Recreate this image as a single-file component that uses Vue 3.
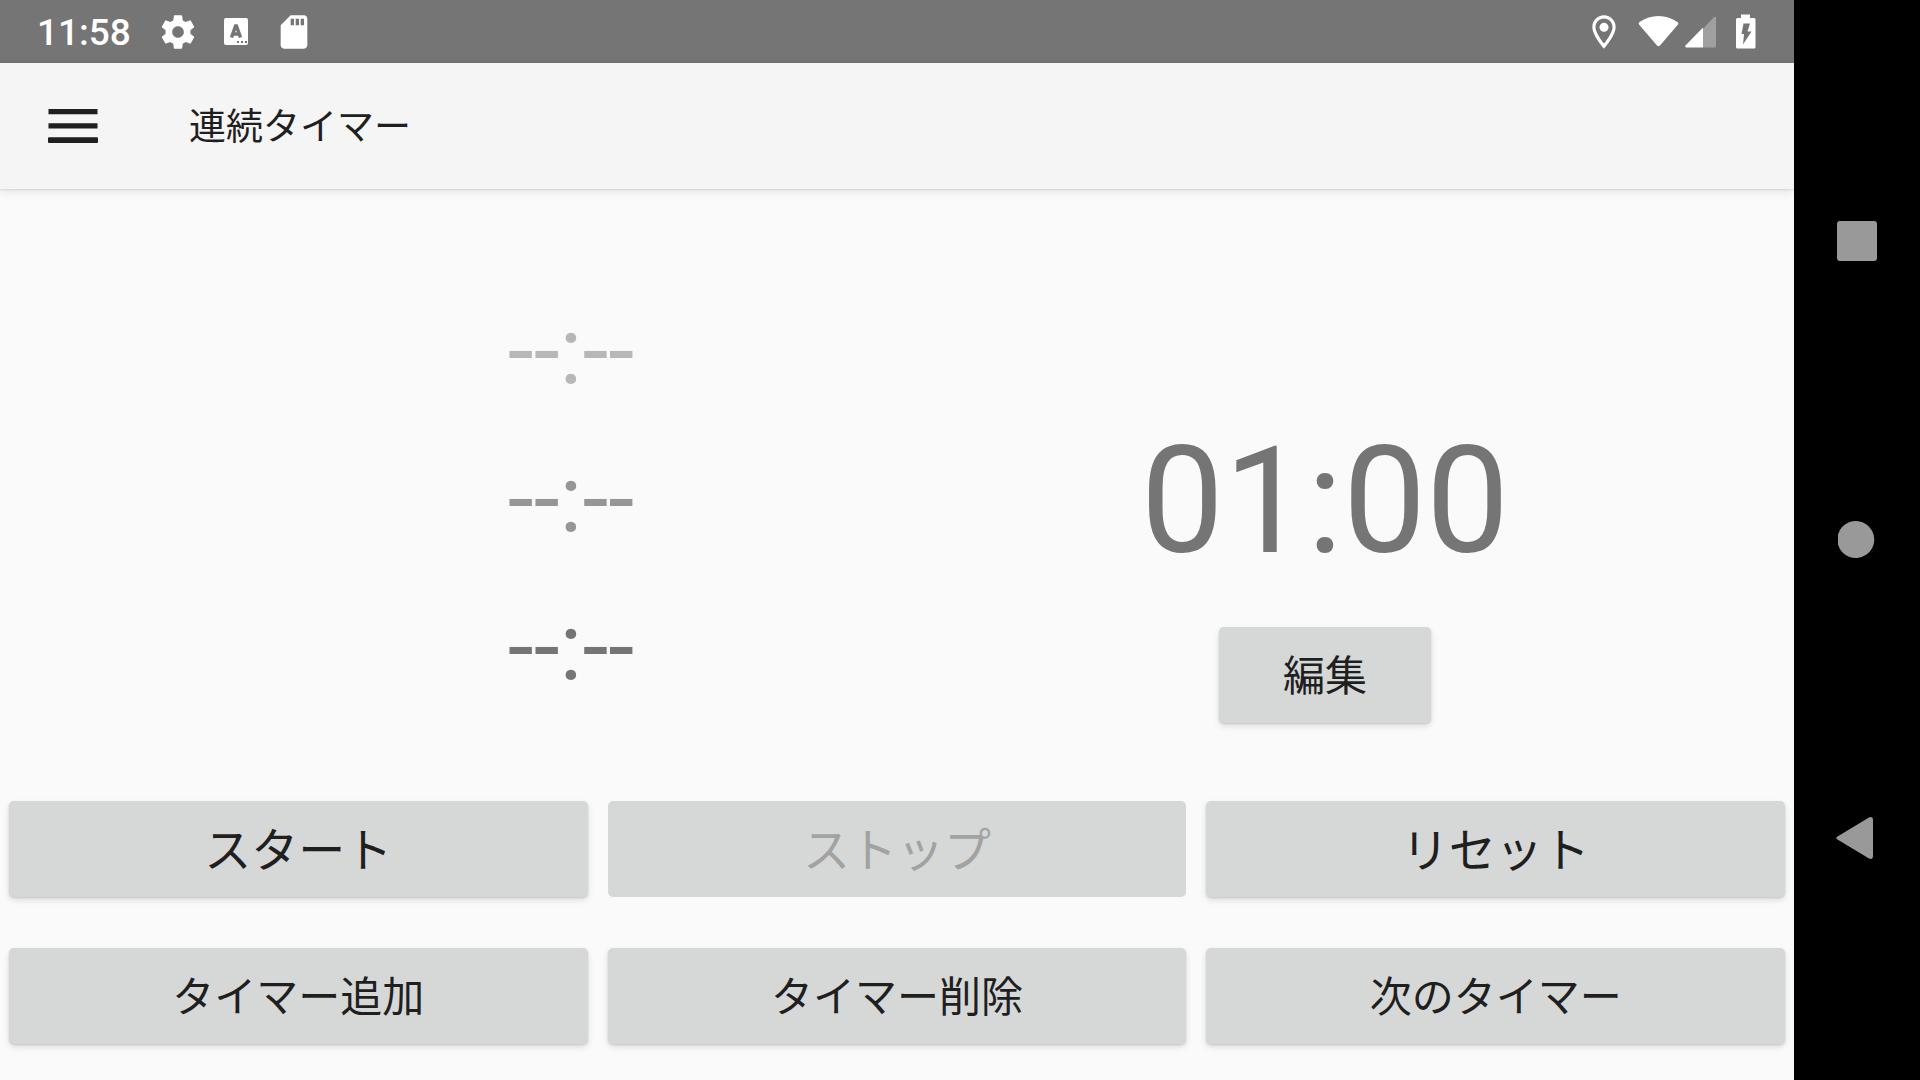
<script setup>
const queue = [
  { id: 1, label: '--:--', tone: 'far' },
  { id: 2, label: '--:--', tone: 'mid' },
  { id: 3, label: '--:--', tone: 'near' }
]

const controls = [
  { label: 'スタート', large: true },
  { label: 'ストップ', large: true, disabled: true },
  { label: 'リセット', large: true },
  { label: 'タイマー追加' },
  { label: 'タイマー削除' },
  { label: '次のタイマー' }
]
</script>

<template>
  <div class="device">
    <div class="app">
      <div class="status-bar">
        <div class="status-left">
          <time class="clock">11:58</time>
          <svg class="icon" viewBox="0 0 24 24" aria-hidden="true">
            <path d="M19.43 12.98c.04-.32.07-.64.07-.98s-.03-.66-.07-.98l2.11-1.65c.19-.15.24-.42.12-.64l-2-3.46c-.12-.22-.39-.3-.61-.22l-2.49 1c-.52-.4-1.08-.73-1.69-.98l-.38-2.65C14.46 2.18 14.25 2 14 2h-4c-.25 0-.46.18-.49.42l-.38 2.65c-.61.25-1.17.59-1.69.98l-2.49-1c-.23-.09-.49 0-.61.22l-2 3.46c-.13.22-.07.49.12.64l2.11 1.65c-.04.32-.07.65-.07.98s.03.66.07.98l-2.11 1.65c-.19.15-.24.42-.12.64l2 3.46c.12.22.39.3.61.22l2.49-1c.52.4 1.08.73 1.69.98l.38 2.65c.03.24.24.42.49.42h4c.25 0 .46-.18.49-.42l.38-2.65c.61-.25 1.17-.59 1.69-.98l2.49 1c.23.09.49 0 .61-.22l2-3.46c.12-.22.07-.49-.12-.64l-2.11-1.65zM12 15.5c-1.93 0-3.5-1.57-3.5-3.5s1.57-3.5 3.5-3.5 3.5 1.57 3.5 3.5-1.57 3.5-3.5 3.5z" />
          </svg>
          <svg class="icon" viewBox="0 0 40 40" aria-hidden="true">
            <rect x="8" y="6" width="24" height="27" rx="2" />
            <path class="cut-line" d="M15.500 25.500L19.600 14H20.400L24.500 25.500M17 22H23" />
            <path class="cut" d="M21 29h2v2h-2zM25 29h2v2h-2zM29 29h2v2h-2z" />
          </svg>
          <svg class="icon" viewBox="0 0 24 24" aria-hidden="true">
            <path d="M18 2h-8L4.020 8 4 20c0 1.100.9 2 2 2h12c1.100 0 2-.9 2-2V4c0-1.100-.9-2-2-2zm-6 6h-2V4h2v4zm3 0h-2V4h2v4zm3 0h-2V4h2v4z" />
          </svg>
        </div>
        <div class="status-right">
          <svg class="icon" viewBox="0 0 24 24" aria-hidden="true">
            <path d="M12 2C8.130 2 5 5.130 5 9c0 5.250 7 13 7 13s7-7.750 7-13c0-3.870-3.130-7-7-7zM6.900 9c0-2.800 2.300-5.100 5.100-5.100s5.100 2.300 5.100 5.100c0 2.880-2.780 7.090-5.100 9.900C9.720 16.110 6.900 11.850 6.900 9z" />
            <circle cx="12" cy="9.200" r="2.700" />
          </svg>
          <div class="radios">
            <svg class="radio" viewBox="0 0 42 40" aria-hidden="true">
              <path d="M1 12.500Q0 11 1.500 10C13 2 28 2 39.500 10Q41 11 40 12.500L22 33.500Q20.500 35 19 33.500Z" />
            </svg>
            <svg class="radio" viewBox="0 0 42 40" aria-hidden="true">
              <path class="dim" d="M23 17L33.500 5.500Q36 4 36 6V34Q36 35.500 34.500 35.500H23Z" />
              <path d="M23 35.500H6Q4.500 35 5.500 33.500L23 15.500Z" />
            </svg>
          </div>
          <svg class="battery" viewBox="0 0 20 40" aria-hidden="true">
            <path d="M5 2.500H14V6H18Q19.500 6 19.500 7.500V35Q19.500 36.500 18 36.500H1.500Q0 36.500 0 35V7.500Q0 6 1.500 6H5Z" />
            <path class="cut" d="M7.500 11.500H14L11.500 19.500H15.500L7 32.500L8 22H5.500Z" />
          </svg>
        </div>
      </div>

      <header class="app-bar">
        <button class="menu" type="button" aria-label="メニュー">
          <svg viewBox="0 0 50 34" aria-hidden="true">
            <path d="M0.500 0h49v5.300h-49zM0.500 14.200h49v5.300h-49z" />
            <rect x="0" y="28.200" width="50" height="5.800" rx="1" />
          </svg>
        </button>
        <h1 class="title">連続タイマー</h1>
      </header>

      <main class="content">
        <section class="display">
          <ol class="queue">
            <li v-for="item in queue" :key="item.id" :class="item.tone">{{ item.label }}</li>
          </ol>
          <div class="current">
            <div class="remaining">01:00</div>
            <button class="action edit" type="button">編集</button>
          </div>
        </section>
        <section class="controls">
          <button
            v-for="control in controls"
            :key="control.label"
            class="action"
            :class="{ large: control.large }"
            type="button"
            :disabled="control.disabled"
          >{{ control.label }}</button>
        </section>
      </main>
    </div>

    <nav class="system-nav">
      <button type="button" aria-label="履歴">
        <svg viewBox="0 0 42 42" aria-hidden="true"><rect x="1" y="1" width="40" height="40" rx="3" /></svg>
      </button>
      <button type="button" aria-label="ホーム">
        <svg viewBox="0 0 42 42" aria-hidden="true"><path d="M2 15.500A18.500 18.500 0 1 1 2 25.500Z" /></svg>
      </button>
      <button type="button" aria-label="戻る">
        <svg viewBox="0 0 42 42" aria-hidden="true"><path d="M1.500 18.500L33 -.5Q37 -2 37 2V38Q37 42 33 40.500L1.500 21.500Q-1 20 1.500 18.500Z" /></svg>
      </button>
    </nav>
  </div>
</template>

<style>
body {
  margin: 0;
  background: #000;
}
</style>

<style scoped>
.device {
  display: flex;
  min-height: 100vh;
  font-family: Roboto, "Noto Sans CJK JP", sans-serif;
  color: #1f1f1f;
}

.app {
  flex: 1;
  min-width: 0;
  display: flex;
  flex-direction: column;
  background: #fafafa;
}

button {
  margin: 0;
  padding: 0;
  border: 0;
  font: inherit;
  color: inherit;
  background: none;
}

svg {
  display: block;
}

.status-bar {
  height: 63px;
  padding: 0 38px 0 37px;
  display: flex;
  align-items: center;
  justify-content: space-between;
  background: #757575;
  color: #fff;
}

.status-left {
  display: flex;
  align-items: center;
  gap: 18px;
}

.clock {
  min-width: 103px;
  padding-top: 2px;
  font-size: 37px;
  font-weight: 500;
  line-height: 40px;
}

.status-right {
  display: flex;
  align-items: center;
  gap: 14px;
}

.radios {
  display: flex;
}

.icon,
.radio,
.battery {
  height: 40px;
  fill: #fff;
}

.icon {
  width: 40px;
}

.radio {
  width: 42px;
}

.battery {
  width: 20px;
}

.cut {
  fill: #757575;
}

.cut-line {
  fill: none;
  stroke: #757575;
  stroke-width: 3.500;
}

.dim {
  fill: #a0a0a0;
}

.app-bar {
  position: relative;
  height: 126px;
  padding-left: 48px;
  display: flex;
  align-items: center;
  gap: 91px;
  background: #f5f5f5;
  box-shadow: 0 1px 2px rgba(0, 0, 0, 0.1), 0 3px 9px rgba(0, 0, 0, 0.08);
}

.menu svg {
  width: 50px;
  height: 34px;
  fill: #1f1f1f;
}

.title {
  margin: 0;
  padding-top: 4px;
  font-size: 37px;
  font-weight: 400;
  line-height: 54px;
}

.content {
  flex: 1;
  padding: 0 9px 36px;
  display: flex;
  flex-direction: column;
  gap: 78px;
}

.display {
  flex: 1;
  display: grid;
  grid-template-columns: 268fr 588fr 920fr;
  align-items: end;
}

.queue {
  grid-column: 2;
  margin: 0;
  padding: 0 0 2px;
  list-style: none;
  text-align: center;
  font-size: 94px;
  line-height: 148px;
  color: #757575;
}

.far {
  color: #b7b7b7;
}

.mid {
  color: #969696;
}

.current {
  display: flex;
  flex-direction: column;
  align-items: center;
  gap: 38px;
}

.remaining {
  font-size: 148px;
  line-height: 174px;
  color: #757575;
}

.controls {
  display: grid;
  grid-template-columns: repeat(3, 1fr);
  gap: 51px 20px;
}

.action {
  height: 96px;
  padding-top: 4px;
  border-radius: 5px;
  background: #d6d8d7;
  box-shadow: 0 1px 2px rgba(0, 0, 0, 0.12), 0 3px 6px rgba(0, 0, 0, 0.12);
  font-size: 42px;
  line-height: 60px;
}

.large {
  font-size: 47px;
}

.edit {
  width: 212px;
}

.action:disabled {
  color: #a1a2a1;
  box-shadow: none;
}

.system-nav {
  width: 126px;
  display: flex;
  flex-direction: column;
  justify-content: center;
  background: #000;
}

.system-nav button {
  flex: 0 1 299px;
  display: flex;
  align-items: center;
  justify-content: center;
}

.system-nav svg {
  width: 42px;
  height: 42px;
  fill: #999;
  overflow: visible;
}
</style>
